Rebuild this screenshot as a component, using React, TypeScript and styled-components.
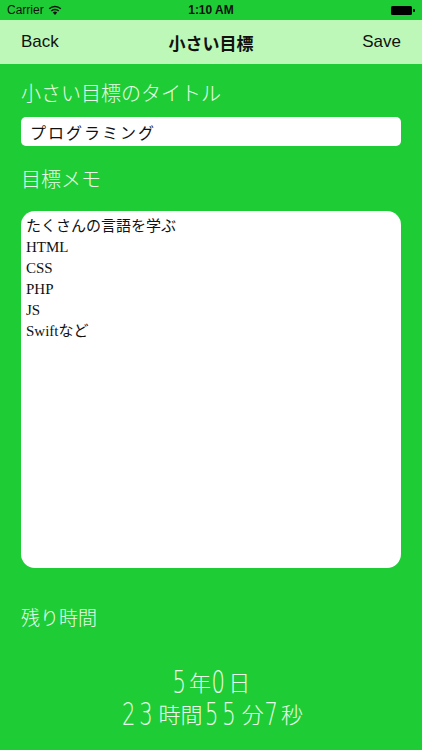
import * as React from "react";
import styled, { createGlobalStyle } from "styled-components";

const GREEN = "#1ecd35";
const LIGHT = "#bdf8b8";

const serif = `"Liberation Serif", "Noto Sans CJK JP", serif`;
const sans = `"Liberation Sans", "Noto Sans CJK JP", sans-serif`;

const Global = createGlobalStyle`
  html, body {
    margin: 0;
    padding: 0;
    background: ${GREEN};
  }
`;

const Screen = styled("div")`
  width: 422px;
  height: 750px;
  background: ${GREEN};
  overflow: hidden;
`;

const StatusBar = styled("div")`
  height: 20px;
  display: flex;
  align-items: center;
  justify-content: space-between;
  padding: 0 7px;
  font-family: ${sans};
  font-size: 12px;
  color: #111;
  position: relative;
`;

const Carrier = styled("div")`
  display: flex;
  align-items: center;
  gap: 4px;
`;

const Clock = styled("div")`
  position: absolute;
  left: 0;
  right: 0;
  text-align: center;
  font-weight: bold;
`;

const Battery = styled("div")`
  width: 21px;
  height: 9px;
  background: #000;
  border-radius: 1.5px;
  margin-right: 3px;
  position: relative;

  &::after {
    content: "";
    position: absolute;
    right: -3px;
    top: 3px;
    width: 2px;
    height: 3px;
    background: #000;
    border-radius: 0 1px 1px 0;
  }
`;

const NavBar = styled("div")`
  height: 44px;
  background: ${LIGHT};
  display: flex;
  align-items: center;
  justify-content: space-between;
  padding: 0 21px;
  font-family: ${sans};
  font-size: 17px;
  color: #111;
  position: relative;
`;

const NavTitle = styled("div")`
  position: absolute;
  left: 0;
  right: 0;
  text-align: center;
  font-weight: bold;
  pointer-events: none;
`;

const Content = styled("div")`
  padding: 0 21px;
`;

interface LabelProps {
  readonly gap: number;
  readonly size?: number;
}

const Label = styled("div")<LabelProps>`
  margin-top: ${({ gap }) => gap}px;
  font-family: ${serif};
  font-size: ${({ size }) => size ?? 20}px;
  line-height: 24px;
  font-weight: 300;
  color: #eafde9;
`;

const TextField = styled("div")`
  margin-top: 11px;
  height: 29px;
  background: #fff;
  border-radius: 5px;
  display: flex;
  align-items: center;
  padding: 0 9px;
  font-family: ${serif};
  font-size: 16px;
  font-weight: 400;
  letter-spacing: 2px;
  color: #111;
`;

const Memo = styled("div")`
  margin-top: 19px;
  height: 357px;
  background: #fff;
  border-radius: 14px;
  padding: 5px 5px;
  box-sizing: border-box;
  font-family: ${serif};
  font-size: 15px;
  line-height: 21px;
  color: #111;
`;

const Countdown = styled("div")`
  margin-top: 34px;
  text-align: center;
  font-family: "Noto Sans CJK JP", "DejaVu Sans", sans-serif;
  font-weight: 300;
  font-size: 22px;
  color: #eafde9;
`;

const CountLine = styled("div")`
  height: 32px;
  line-height: 32px;
  white-space: nowrap;
`;

const Digits = styled("span")`
  display: inline-block;
  font-family: "DejaVu Sans", sans-serif;
  font-weight: 200;
  font-size: 27px;
  line-height: 27px;
  letter-spacing: 5px;
  transform: scale(0.78, 1.2);
  margin: 0 -3px 0 -2px;
`;

const memoLines = ["たくさんの言語を学ぶ", "HTML", "CSS", "PHP", "JS", "Swiftなど"];

const WifiIcon = () => (
  <svg width="14" height="10" viewBox="0 0 14 10">
    <path d="M7 10 L4.8 7.6 A3.2 3.2 0 0 1 9.2 7.6 Z" fill="#111" />
    <path d="M3.3 6 A5.3 5.3 0 0 1 10.7 6" stroke="#111" strokeWidth="1.5" fill="none" />
    <path d="M1.2 3.8 A8.3 8.3 0 0 1 12.8 3.8" stroke="#111" strokeWidth="1.5" fill="none" />
  </svg>
);

export default function App(): JSX.Element {
  return (
    <Screen>
      <Global />
      <StatusBar>
        <Carrier>
          Carrier <WifiIcon />
        </Carrier>
        <Clock>1:10 AM</Clock>
        <Battery />
      </StatusBar>
      <NavBar>
        <span>Back</span>
        <NavTitle>小さい目標</NavTitle>
        <span>Save</span>
      </NavBar>
      <Content>
        <Label gap={18}>小さい目標のタイトル</Label>
        <TextField>プログラミング</TextField>
        <Label gap={22}>目標メモ</Label>
        <Memo>
          {memoLines.map((line) => (
            <div key={line}>{line}</div>
          ))}
        </Memo>
        <Label gap={39} size={19}>残り時間</Label>
        <Countdown>
          <CountLine>
            <Digits>5</Digits>年<Digits>0</Digits>日
          </CountLine>
          <CountLine>
            <Digits>23</Digits>時間<Digits>55</Digits>分<Digits>7</Digits>秒
          </CountLine>
        </Countdown>
      </Content>
    </Screen>
  );
}
